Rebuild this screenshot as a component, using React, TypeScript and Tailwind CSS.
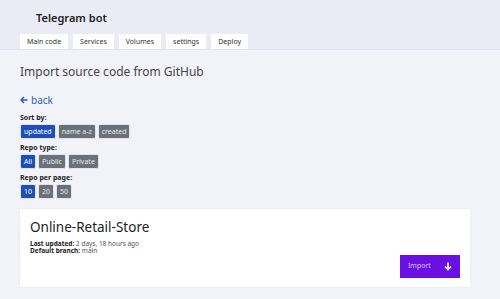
import React from "react";

const font = { fontFamily: '"Noto Sans", "Open Sans", sans-serif' };

function Btn({ label, active }: { label: string; active?: boolean }) {
  return (
    <button
      className={
        active
          ? "h-[15px] px-[3px] rounded-[2px] border border-[#dfe3ee] bg-[#1e4fb8] text-white text-[7px] leading-none"
          : "h-[15px] px-[3px] rounded-[2px] border border-[#dfe3ee] bg-[#6c7078] text-[#e6e8ec] text-[7px] leading-none"
      }
    >
      {label}
    </button>
  );
}

export default function App() {
  const tabs = ["Main code", "Services", "Volumes", "settings", "Deploy"];
  return (
    <div className="w-[500px] h-[299px] bg-[#f2f3f8] overflow-hidden" style={font}>
      <div className="h-[50px] bg-[#ebebf6] border-b border-[#e2e2f0] flex flex-col">
        <div className="h-[34px] pl-[36px] pt-[12px] text-[11px] font-semibold text-[#222] leading-none">
          Telegram bot
        </div>
        <div className="flex gap-[5px] pl-[20px]">
          {tabs.map((t) => (
            <div
              key={t}
              className="h-[15px] px-[7px] bg-white text-[7px] text-[#333] flex items-center leading-none"
            >
              {t}
            </div>
          ))}
        </div>
      </div>
      <div className="px-[20px]">
        <div className="mt-[16px] text-[12px] text-[#444] leading-none">Import source code from GitHub</div>
        <div className="mt-[17px] text-[10px] text-[#2860c4] leading-none flex items-center gap-[3px]">
          <svg width="8" height="8" viewBox="0 0 8 8" fill="none" stroke="#2860c4" strokeWidth="1.5">
            <path d="M7.5 4H1M4 1L1 4l3 3" />
          </svg>
          <span>back</span>
        </div>
        <div className="mt-[9px] text-[7px] font-bold text-[#222] leading-none">Sort by:</div>
        <div className="mt-[3px] flex gap-[2px]">
          <Btn label="updated" active />
          <Btn label="name a-z" />
          <Btn label="created" />
        </div>
        <div className="mt-[5px] text-[7px] font-bold text-[#222] leading-none">Repo type:</div>
        <div className="mt-[3px] flex gap-[2px]">
          <Btn label="All" active />
          <Btn label="Public" />
          <Btn label="Private" />
        </div>
        <div className="mt-[5px] text-[7px] font-bold text-[#222] leading-none">Repo per page:</div>
        <div className="mt-[3px] flex gap-[2px]">
          <Btn label="10" active />
          <Btn label="20" />
          <Btn label="50" />
        </div>
        <div className="mt-[10px] w-[450px] h-[78px] bg-white rounded-[2px] shadow-[0_0_2px_rgba(0,0,0,0.08)] px-[10px] pt-[12px] flex flex-col">
          <div className="text-[13.5px] text-[#222] leading-none">Online-Retail-Store</div>
          <div className="mt-[5px] text-[6.5px] leading-[7.5px] text-[#555]">
            <div><b className="text-[#222]">Last updated:</b> 2 days, 18 hours ago</div>
            <div><b className="text-[#222]">Default branch:</b> main</div>
          </div>
          <div className="flex justify-end mt-[0px]">
            <button className="w-[60px] h-[23px] bg-[#6a10e2] flex items-center justify-between px-[8px] text-[7px] text-[#d8c4ff]">
              <span>Import</span>
              <svg width="8" height="9" viewBox="0 0 8 9" fill="none" stroke="white" strokeWidth="1.6">
                <path d="M4 0.5v7M1 4.5l3 3 3-3" />
              </svg>
            </button>
          </div>
        </div>
      </div>
    </div>
  );
}
